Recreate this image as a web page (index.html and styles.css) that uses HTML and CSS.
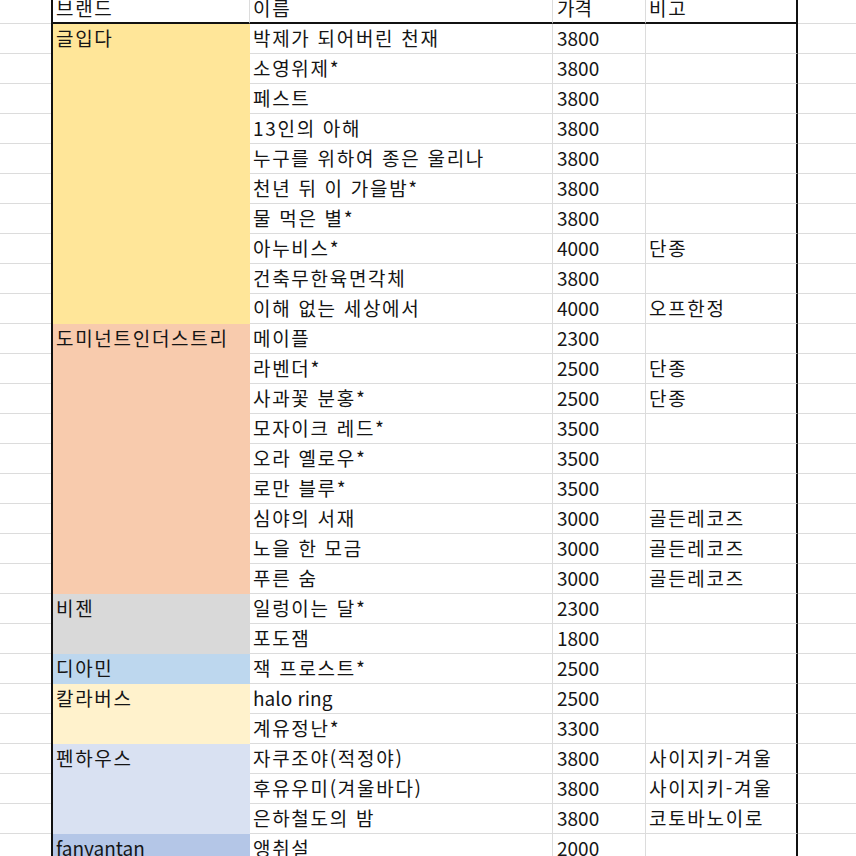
FILE: index.html
```html
<!DOCTYPE html>
<html lang="ko">
<head>
<meta charset="utf-8">
<title>Sheet</title>
<link rel="stylesheet" href="styles.css">
</head>
<body>
<div class="sheet">
  <div class="c a head"></div><div class="c brand th">브랜드</div><div class="c name th">이름</div><div class="c price th">가격</div><div class="c note th">비고</div><div class="c x head"></div>

  <div class="c a"></div><div class="c brand span10 gold">글입다</div><div class="c name">박제가 되어버린 천재</div><div class="c price">3800</div><div class="c note"></div><div class="c x"></div>
  <div class="c a"></div><div class="c name">소영위제*</div><div class="c price">3800</div><div class="c note"></div><div class="c x"></div>
  <div class="c a"></div><div class="c name">페스트</div><div class="c price">3800</div><div class="c note"></div><div class="c x"></div>
  <div class="c a"></div><div class="c name">13인의 아해</div><div class="c price">3800</div><div class="c note"></div><div class="c x"></div>
  <div class="c a"></div><div class="c name">누구를 위하여 종은 울리나</div><div class="c price">3800</div><div class="c note"></div><div class="c x"></div>
  <div class="c a"></div><div class="c name">천년 뒤 이 가을밤*</div><div class="c price">3800</div><div class="c note"></div><div class="c x"></div>
  <div class="c a"></div><div class="c name">물 먹은 별*</div><div class="c price">3800</div><div class="c note"></div><div class="c x"></div>
  <div class="c a"></div><div class="c name">아누비스*</div><div class="c price">4000</div><div class="c note">단종</div><div class="c x"></div>
  <div class="c a"></div><div class="c name">건축무한육면각체</div><div class="c price">3800</div><div class="c note"></div><div class="c x"></div>
  <div class="c a"></div><div class="c name">이해 없는 세상에서</div><div class="c price">4000</div><div class="c note">오프한정</div><div class="c x"></div>

  <div class="c a"></div><div class="c brand span9 salmon">도미넌트인더스트리</div><div class="c name">메이플</div><div class="c price">2300</div><div class="c note"></div><div class="c x"></div>
  <div class="c a"></div><div class="c name">라벤더*</div><div class="c price">2500</div><div class="c note">단종</div><div class="c x"></div>
  <div class="c a"></div><div class="c name">사과꽃 분홍*</div><div class="c price">2500</div><div class="c note">단종</div><div class="c x"></div>
  <div class="c a"></div><div class="c name">모자이크 레드*</div><div class="c price">3500</div><div class="c note"></div><div class="c x"></div>
  <div class="c a"></div><div class="c name">오라 옐로우*</div><div class="c price">3500</div><div class="c note"></div><div class="c x"></div>
  <div class="c a"></div><div class="c name">로만 블루*</div><div class="c price">3500</div><div class="c note"></div><div class="c x"></div>
  <div class="c a"></div><div class="c name">심야의 서재</div><div class="c price">3000</div><div class="c note">골든레코즈</div><div class="c x"></div>
  <div class="c a"></div><div class="c name">노을 한 모금</div><div class="c price">3000</div><div class="c note">골든레코즈</div><div class="c x"></div>
  <div class="c a"></div><div class="c name">푸른 숨</div><div class="c price">3000</div><div class="c note">골든레코즈</div><div class="c x"></div>

  <div class="c a"></div><div class="c brand span2 grey">비젠</div><div class="c name">일렁이는 달*</div><div class="c price">2300</div><div class="c note"></div><div class="c x"></div>
  <div class="c a"></div><div class="c name">포도잼</div><div class="c price">1800</div><div class="c note"></div><div class="c x"></div>

  <div class="c a"></div><div class="c brand sky">디아민</div><div class="c name">잭 프로스트*</div><div class="c price">2500</div><div class="c note"></div><div class="c x"></div>

  <div class="c a"></div><div class="c brand span2 cream">칼라버스</div><div class="c name latin">halo ring</div><div class="c price">2500</div><div class="c note"></div><div class="c x"></div>
  <div class="c a"></div><div class="c name">계유정난*</div><div class="c price">3300</div><div class="c note"></div><div class="c x"></div>

  <div class="c a"></div><div class="c brand span3 lav">펜하우스</div><div class="c name">자쿠조야(적정야)</div><div class="c price">3800</div><div class="c note">사이지키-겨울</div><div class="c x"></div>
  <div class="c a"></div><div class="c name">후유우미(겨울바다)</div><div class="c price">3800</div><div class="c note">사이지키-겨울</div><div class="c x"></div>
  <div class="c a"></div><div class="c name">은하철도의 밤</div><div class="c price">3800</div><div class="c note">코토바노이로</div><div class="c x"></div>

  <div class="c a"></div><div class="c brand steel latin">fanyantan</div><div class="c name">앵취설</div><div class="c price">2000</div><div class="c note"></div><div class="c x"></div>
</div>
</body>
</html>
```
FILE: styles.css
```css
* { box-sizing: border-box; }
html, body {
  margin: 0;
  padding: 0;
  background: #ffffff;
  overflow: hidden;
  width: 856px;
  height: 856px;
}
.sheet {
  margin-top: -7px;
  display: grid;
  grid-template-columns: 51px 199px 303px 93px 152px 58px;
  grid-template-rows: 31px;
  grid-auto-rows: 30px;
  font-family: "Noto Sans CJK KR", "Noto Sans", sans-serif;
  font-size: 19px;
  color: #151515;
}
.c {
  line-height: 27px;
  padding-left: 3px;
  white-space: nowrap;
  overflow: hidden;
  border-bottom: 1px solid #dcdcdc;
  letter-spacing: 1.7px;
}
.a { grid-column: 1; }
.brand { grid-column: 2; border-left: 2px solid #111; border-bottom: none; padding-left: 3px; }
.name { grid-column: 3; border-right: 1px solid #dcdcdc; }
.price { grid-column: 4; border-right: 1px solid #dcdcdc; padding-left: 4px; letter-spacing: 0; }
.note { grid-column: 5; border-right: 2px solid #111; }
.x { grid-column: 6; }
.latin { letter-spacing: 0; }

.th { border-bottom: 2px solid #111; line-height: 29px; }
.brand.th { border-right: 1px solid #dcdcdc; border-bottom: 2px solid #111; }

.span2 { grid-row: span 2; }
.span3 { grid-row: span 3; }
.span9 { grid-row: span 9; }
.span10 { grid-row: span 10; }

.gold { background: #ffe699; }
.salmon { background: #f8cbad; }
.grey { background: #d9d9d9; }
.sky { background: #bdd7ee; }
.cream { background: #fff2cc; }
.lav { background: #d9e1f2; }
.steel { background: #b4c6e7; }
```
